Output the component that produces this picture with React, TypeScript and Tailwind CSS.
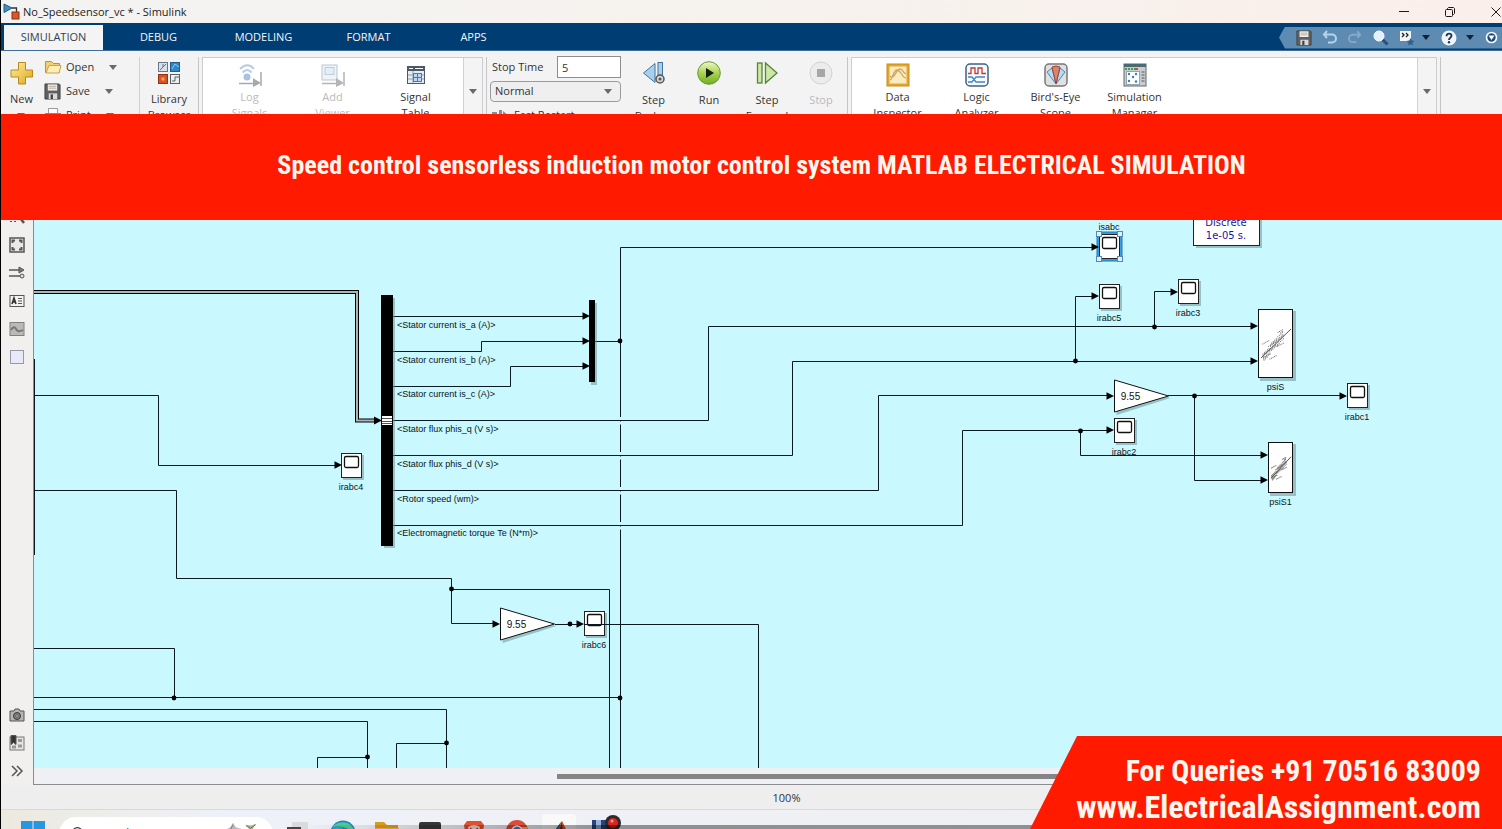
import type { ReactNode } from 'react';

const UI = 'font-["Open_Sans","Noto_Sans",sans-serif]';

function Caret({ className = 'text-[#6a6a6a]' }: { className?: string }) {
  return (
    <svg width="8" height="5" viewBox="0 0 8 5" className={className} aria-hidden="true">
      <path d="M0 0h8L4 5z" fill="currentColor" />
    </svg>
  );
}

function SaveIcon({ size = 18 }: { size?: number }) {
  return (
    <svg width={size} height={size} viewBox="0 0 18 18" aria-hidden="true">
      <path d="M1 1h15l1 1v15H1z" fill="#5f5f61" stroke="#444" />
      <path d="M4 1.500h10V8H4z" fill="#f0eeec" />
      <path d="M5 3.500h8M5 5.500h8" stroke="#b5a99c" />
      <path d="M5 11h9v6H5z" fill="#d9d9d9" />
      <path d="M7 12h2.500v5H7z" fill="#444" />
    </svg>
  );
}

function TitleBar() {
  return (
    <header className="flex h-[23px] shrink-0 items-center bg-gradient-to-r from-[#f3f3f2] via-[#f6f2ee] to-[#fbefea] pl-[2px]">
      <svg width="18" height="17" viewBox="0 0 18 17" aria-hidden="true">
        <path d="M1 1l8 4-8 4.500z" fill="#3d8fc4" stroke="#225c85" />
        <path d="M9 5h4.500v4" fill="none" stroke="#333" strokeWidth="1.300" />
        <rect x="9" y="9" width="7" height="7" fill="#d9572b" stroke="#8c3013" />
      </svg>
      <h1 className="pl-[2px] text-[11px] leading-[16px] text-[#1c1c1c]">No_Speedsensor_vc * - Simulink</h1>
      <div className="mr-[-17px] ml-auto flex text-[#1a1a1a]">
        <button aria-label="Minimize" className="flex h-[22px] w-[46px] items-center justify-center">
          <svg width="12" height="12" viewBox="0 0 12 12"><path d="M1 5.500h10" stroke="currentColor" /></svg>
        </button>
        <button aria-label="Restore" className="flex h-[22px] w-[46px] items-center justify-center">
          <svg width="12" height="12" viewBox="0 0 12 12" fill="none" stroke="currentColor">
            <rect x="1.500" y="3.500" width="7" height="7" rx="1" />
            <path d="M3.500 3V2.500l1-1h5l1 1v5l-1 1H9" />
          </svg>
        </button>
        <button aria-label="Close" className="flex h-[22px] w-[46px] items-center justify-center">
          <svg width="12" height="12" viewBox="0 0 12 12"><path d="M1.500 1.500l9 9M10.500 1.500l-9 9" stroke="currentColor" /></svg>
        </button>
      </div>
    </header>
  );
}

function QuickAccess() {
  return (
    <div className="ml-auto flex h-[22px] items-center bg-[#5d8bb2] pl-[15px] [clip-path:polygon(0_50%,6px_0,100%_0,100%_100%,6px_100%)]">
      <button aria-label="Save" className="flex w-[19px] justify-center"><SaveIcon size={16} /></button>
      <button aria-label="Undo" className="flex w-[33px] justify-center">
        <svg width="15" height="15" viewBox="0 0 15 15" fill="none" stroke="#b4d3ec" strokeWidth="2">
          <path d="M5 1L2 4.500 5 8M2 4.500h8a3.500 3.500 0 010 8H6" />
        </svg>
      </button>
      <button aria-label="Redo" className="flex w-[18px] justify-center">
        <svg width="14" height="15" viewBox="0 0 15 15" fill="none" stroke="#86aac9" strokeWidth="2">
          <path d="M10 1l3 3.500L10 8M13 4.500H5a3.500 3.500 0 000 8h4" />
        </svg>
      </button>
      <button aria-label="Find" className="flex w-[34px] justify-center">
        <svg width="16" height="16" viewBox="0 0 16 16">
          <path d="M9 9l5.500 5.500" stroke="#294f7c" strokeWidth="3" />
          <circle cx="6" cy="6" r="5" fill="#e3f1fb" stroke="#fafdff" />
        </svg>
      </button>
      <button aria-label="Favorites" className="flex w-[18px] justify-center">
        <svg width="16" height="16" viewBox="0 0 16 16">
          <path d="M1 1h11v10H1z" fill="#f3f5f7" />
          <path d="M3 3l2 2-2 2M7 3l2 2-2 2" fill="none" stroke="#222" strokeWidth="1.300" />
          <path d="M11.500 8l1.200 2.600 2.800.3-2.100 1.900.6 2.800-2.500-1.400L9 15.600l.6-2.800-2.100-1.900 2.800-.3z" fill="#2f5f90" />
        </svg>
      </button>
      <button aria-label="Favorites menu" className="flex w-[20px] justify-center"><Caret className="text-[#0e2339]" /></button>
      <button aria-label="Help" className="flex w-[26px] justify-center">
        <svg width="16" height="16" viewBox="0 0 16 16">
          <circle cx="8" cy="8" r="7.500" fill="#f2f6fa" />
          <path d="M5.500 6.200c0-3.400 5-3.400 5-.4C10.500 7.700 8 7.800 8 10" fill="none" stroke="#1c3958" strokeWidth="1.900" />
          <circle cx="8" cy="12.300" r="1.200" fill="#1c3958" />
        </svg>
      </button>
      <button aria-label="Help menu" className="flex w-[16px] justify-center"><Caret className="text-[#0e2339]" /></button>
      <button aria-label="Minimize toolstrip" className="flex w-[24px] justify-end pr-[4px]">
        <svg width="13" height="13" viewBox="0 0 13 13">
          <circle cx="6.500" cy="6.500" r="5" fill="#1f4b7a" stroke="#f2f7fb" strokeWidth="1.700" />
          <path d="M3.500 4.500h6l-3 4.500z" fill="#fff" />
        </svg>
      </button>
    </div>
  );
}

function TabBar() {
  return (
    <nav className="flex h-[28px] shrink-0 items-end border-b border-[#3f6d9b] bg-[#003d73] text-[11px] text-[#f2f6fa]">
      <button className="mr-[3px] ml-[3px] h-[25px] w-[99px] bg-[#f4f4f5] text-[#33424f]">SIMULATION</button>
      {['DEBUG', 'MODELING', 'FORMAT', 'APPS'].map((t) => (
        <button key={t} className="h-[25px] w-[105px]">{t}</button>
      ))}
      <div className="ml-auto flex h-[25px] items-center"><QuickAccess /></div>
    </nav>
  );
}

function BigButton({ icon, lines, width, disabled = false, menu = false, pad = 'gap-[7px]' }: {
  icon: ReactNode; lines: string[]; width: string; disabled?: boolean; menu?: boolean; pad?: string;
}) {
  return (
    <button
      disabled={disabled}
      className={`flex shrink-0 flex-col items-center text-[11px] leading-[16px] whitespace-nowrap ${width} ${pad} ${disabled ? 'text-[#b9babd]' : 'text-[#333]'}`}
    >
      {icon}
      <span className="flex flex-col items-center">
        {lines.map((l, i) => (
          <span key={l} className="flex items-center gap-[5px]">
            {l}
            {menu && i > 0 && <Caret />}
          </span>
        ))}
        {menu && lines.length === 1 && <span className="pt-[6px]"><Caret /></span>}
      </span>
    </button>
  );
}

function GalleryArrow() {
  return (
    <button aria-label="More" className="flex w-[19px] items-start justify-center border-l border-[#d2d2d4] bg-[#f4f4f5] pt-[31px]">
      <Caret />
    </button>
  );
}

const logIcon = (
  <svg width="26" height="24" viewBox="0 0 26 24" fill="none">
    <path d="M3 6c5-5 10-5 14 0M5.500 9.500c3.500-3.500 6-3.500 9 0" stroke="#b4cbe0" strokeWidth="2" />
    <circle cx="10" cy="14" r="3.500" fill="#a9c3dc" />
    <path d="M2 20.500h14M24 9v14" stroke="#a9a9ac" strokeWidth="1.500" />
    <path d="M16 15l8 5-8 4z" fill="#a9a9ac" />
  </svg>
);
const viewerIcon = (
  <svg width="26" height="24" viewBox="0 0 26 24" fill="none">
    <rect x="2" y="2" width="15" height="15" fill="#f0f4f7" stroke="#b8c6d2" />
    <rect x="5" y="4.500" width="9" height="7" fill="#e3eef6" stroke="#b8cedf" />
    <path d="M2 20.500h14M24 9v14" stroke="#b4b4b8" strokeWidth="1.500" />
    <path d="M16 15l8 5-8 4z" fill="#b4b4b8" />
  </svg>
);
const tableIcon = (
  <svg width="20" height="24" viewBox="0 0 20 24">
    <rect x="1.500" y="3.500" width="17" height="17" fill="#e8ecf0" stroke="#4a5a6b" />
    <path d="M1.500 3.500h17V8h-17z" fill="#4a5a6b" />
    <path d="M3 5.500h4M9 5.500h8" stroke="#fff" />
    <path d="M7 8v12M2 12h16M2 16h16" stroke="#8fa0b0" />
    <rect x="7.500" y="10.500" width="8" height="8" fill="#bcd8f5" stroke="#3f7cc0" />
    <path d="M8 14.500h7M11.500 11v7" stroke="#3f7cc0" />
  </svg>
);
const inspectorIcon = (
  <svg width="24" height="24" viewBox="0 0 24 24">
    <rect x="1" y="1" width="22" height="22" fill="#e2a62d" stroke="#c98e1b" />
    <rect x="3.500" y="3.500" width="17" height="17" fill="#fdebc0" />
    <path d="M4 17C7 16 7 7 11 7s5 8 9 8M4 13c4 5 6-7 10-7 3 0 3 4 6 5" fill="none" stroke="#cfa765" strokeWidth="1.300" />
  </svg>
);
const logicIcon = (
  <svg width="24" height="24" viewBox="0 0 24 24" fill="none">
    <rect x="1" y="1" width="22" height="22" rx="4" fill="#f7fafc" stroke="#3d6285" strokeWidth="1.500" />
    <path d="M3 10.500h3V5h4v5.500h3V5h4v5.500h4" stroke="#c23b36" strokeWidth="1.300" />
    <path d="M3 14h4l4 5h9M3 19h4l4-5h9" stroke="#3f86c6" strokeWidth="1.300" />
  </svg>
);
const birdIcon = (
  <svg width="24" height="24" viewBox="0 0 24 24">
    <rect x="1" y="1" width="22" height="22" rx="4" fill="#dfe0e1" stroke="#777" strokeWidth="1.500" />
    <path d="M12 21L3 9l5-4zM12 21l9-12-5-4z" fill="#b8dcf2" stroke="#4886b5" />
    <path d="M12 21L8 4q4-2 8 0z" fill="#d98471" stroke="#a5412f" />
  </svg>
);
const managerIcon = (
  <svg width="24" height="24" viewBox="0 0 24 24">
    <rect x="1" y="1" width="22" height="22" fill="#c9cdcf" stroke="#5e6a70" />
    <path d="M1 1h22v3H1z" fill="#4c6a73" />
    <path d="M2 6h13" stroke="#4c9b4c" strokeWidth="2" strokeDasharray="2 1" />
    <path d="M12 6h2" stroke="#c44" strokeWidth="2" />
    <rect x="3.500" y="8.500" width="13" height="13" fill="#fff" stroke="#98a5ad" />
    <path d="M18.500 9h3M18.500 12h3M18.500 15h3M18.500 18h3" stroke="#555" />
    <g fill="#2f7fc1"><circle cx="6" cy="11" r="1.200" /><circle cx="13" cy="11" r="1.200" /><circle cx="10" cy="14" r="1.200" /><circle cx="6" cy="18" r="1.200" /><circle cx="13" cy="18.500" r="1.200" /></g>
  </svg>
);
const plusIcon = (
  <svg width="24" height="24" viewBox="0 0 24 24">
    <defs><linearGradient id="gold" x1="0" y1="0" x2="1" y2="1"><stop offset="0" stopColor="#fdf09a" /><stop offset="1" stopColor="#e0a520" /></linearGradient></defs>
    <path d="M8.500 1.500h7v7.500h7v7h-7v7h-7v-7H1V9h7.500z" fill="url(#gold)" stroke="#b88a20" />
  </svg>
);
const libraryIcon = (
  <svg width="24" height="24" viewBox="0 0 24 24">
    <rect x="1.500" y="1.500" width="9" height="9" fill="#d7dfe8" stroke="#68788a" />
    <path d="M3 9l3-3V3M6 6l3-3" stroke="#5f7690" fill="none" />
    <rect x="13.500" y="1.500" width="9" height="9" fill="#2f87c6" stroke="#1e5c8c" />
    <path d="M15 8l3-5 4 3" fill="none" stroke="#8ccaf2" />
    <rect x="1.500" y="13.500" width="9" height="9" fill="#d8531f" stroke="#93350f" />
    <rect x="4.500" y="16.500" width="3" height="3" fill="#f0a17b" />
    <rect x="13.500" y="13.500" width="9" height="9" fill="#eceff1" stroke="#56616b" />
    <path d="M15 20h3v-4h4" fill="none" stroke="#56616b" />
  </svg>
);
const stepBackIcon = (
  <svg width="24" height="24" viewBox="0 0 24 24">
    <path d="M13 2.500v19L1.500 12z" fill="#a9cfea" stroke="#44759c" />
    <rect x="16" y="1.500" width="4.500" height="18" fill="#a9cfea" stroke="#44759c" />
    <circle cx="18" cy="18" r="4" fill="#d5d5d5" stroke="#555" strokeWidth="1.500" />
    <circle cx="18" cy="18" r="1.500" fill="#555" />
  </svg>
);
const runIcon = (
  <svg width="24" height="24" viewBox="0 0 24 24">
    <defs><linearGradient id="run" x1="0" y1="0" x2="0" y2="1"><stop offset="0" stopColor="#edf7c9" /><stop offset=".5" stopColor="#a9d552" /><stop offset="1" stopColor="#6fae21" /></linearGradient></defs>
    <circle cx="12" cy="12" r="11.300" fill="url(#run)" stroke="#6a9a30" />
    <path d="M9 7l8 5-8 5z" fill="#14200a" />
  </svg>
);
const stepForwardIcon = (
  <svg width="24" height="24" viewBox="0 0 24 24" fill="#cde8a6" stroke="#55863a" strokeWidth="1.300">
    <rect x="2.500" y="2" width="4.500" height="20" />
    <path d="M10.500 2v20L22 12z" />
  </svg>
);
const stopIcon = (
  <svg width="24" height="24" viewBox="0 0 24 24">
    <circle cx="12" cy="12" r="11" fill="#ececed" stroke="#d2d2d4" />
    <rect x="8" y="8" width="8" height="8" fill="#a6a6a8" />
  </svg>
);
const folderIcon = (
  <svg width="18" height="16" viewBox="0 0 18 16">
    <path d="M1.500 2.500h6l2 2h6v9h-14z" fill="#f3cf72" stroke="#b8923c" />
    <path d="M5 6.500h12l-2 7.500H2z" fill="#fdeeb5" stroke="#c9a24a" />
  </svg>
);
const printIcon = (
  <svg width="18" height="16" viewBox="0 0 18 16">
    <path d="M4.500 1.500h9v5h-9z" fill="#fff" stroke="#999" />
    <rect x="1.500" y="6.500" width="15" height="7" fill="#c9c9cb" stroke="#888" />
  </svg>
);

function FileRow({ icon, label }: { icon: ReactNode; label: string }) {
  return (
    <button className="flex h-[24px] items-center text-[11px] text-[#333]">
      <span className="flex w-[22px]">{icon}</span>
      {label}
      <span className="pl-[15px]"><Caret /></span>
    </button>
  );
}

function Ribbon() {
  return (
    <div className="flex h-[89px] shrink-0 overflow-hidden bg-[#f3f3f4] pt-[6px]">
      <div className="flex w-[139px] border-r border-[#d0d0d2] pt-[4px]">
        <BigButton icon={plusIcon} lines={['New']} width="w-[41px]" menu pad="gap-[6px]" />
        <div className="mt-[-6px] flex flex-col items-start pl-[2px]">
          <FileRow icon={folderIcon} label="Open" />
          <FileRow icon={<SaveIcon size={17} />} label="Save" />
          <FileRow icon={printIcon} label="Print" />
        </div>
      </div>
      <div className="flex w-[59px] border-r border-[#c6c6c8] pt-[4px]">
        <BigButton icon={libraryIcon} lines={['Library', 'Browser']} width="w-[58px]" pad="gap-[6px]" />
      </div>
      <div className="ml-[3px] flex w-[281px] border border-[#cdcdd0] bg-white">
        <div className="flex flex-1 pt-[5px] pl-[5px]">
          <BigButton icon={logIcon} lines={['Log', 'Signals']} width="w-[83px]" disabled pad="gap-[2px]" />
          <BigButton icon={viewerIcon} lines={['Add', 'Viewer']} width="w-[83px]" disabled pad="gap-[2px]" />
          <BigButton icon={tableIcon} lines={['Signal', 'Table']} width="w-[83px]" pad="gap-[2px]" />
        </div>
        <GalleryArrow />
      </div>
      <div className="ml-[3px] w-[136px] border-l border-[#c6c6c8] pl-[3px] text-[11px] text-[#333]">
        <div className="flex items-center">
          <label htmlFor="stop-time" className="w-[67px] pl-[2px]">Stop Time</label>
          <input id="stop-time" defaultValue="5" className="mt-[-1px] h-[22px] w-[64px] border border-[#8e8e92] bg-white px-[4px]" />
        </div>
        <div className="relative mt-[3px] flex w-[131px] items-center">
          <select aria-label="Simulation mode" className="h-[21px] w-full appearance-none rounded-[4px] border border-[#9b9b9f] bg-[#efeff0] px-[4px]">
            <option>Normal</option>
          </select>
          <span className="pointer-events-none absolute right-[9px]"><Caret /></span>
        </div>
        <button className="mt-[5px] flex items-center gap-[5px] pl-[1px]">
          <svg width="18" height="14" viewBox="0 0 18 14"><path d="M1 4h5v6H1zM8 2h3v10H8zM12 3l5 4-5 4z" fill="#7f90a3" /></svg>
          Fast Restart
        </button>
      </div>
      <div className="ml-[4px] flex w-[222px] border-r border-[#c6c6c8] pt-[4px]">
        <BigButton icon={stepBackIcon} lines={['Step', 'Back']} width="w-[55px]" menu />
        <BigButton icon={runIcon} lines={['Run']} width="w-[56px]" menu />
        <BigButton icon={stepForwardIcon} lines={['Step', 'Forward']} width="w-[60px]" />
        <BigButton icon={stopIcon} lines={['Stop']} width="w-[48px]" disabled />
      </div>
      <div className="mr-[3px] ml-[3px] flex min-w-0 flex-1 border border-[#cdcdd0] bg-white">
        <div className="flex min-w-0 flex-1 overflow-hidden pt-[5px] pl-[6px]">
          <BigButton icon={inspectorIcon} lines={['Data', 'Inspector']} width="w-[79px]" pad="gap-[2px]" />
          <BigButton icon={logicIcon} lines={['Logic', 'Analyzer']} width="w-[79px]" pad="gap-[2px]" />
          <BigButton icon={birdIcon} lines={["Bird's-Eye", 'Scope']} width="w-[79px]" pad="gap-[2px]" />
          <BigButton icon={managerIcon} lines={['Simulation', 'Manager']} width="w-[79px]" pad="gap-[2px]" />
        </div>
        <GalleryArrow />
      </div>
      <div className="w-[62px] border-l border-[#c6c6c8]" />
    </div>
  );
}

function PaletteButton({ label, children }: { label: string; children: ReactNode }) {
  return (
    <button aria-label={label} className="flex h-[28px] w-full shrink-0 items-center justify-center">
      <svg width="16" height="16" viewBox="0 0 16 16" fill="none" stroke="#555">{children}</svg>
    </button>
  );
}

function Palette() {
  return (
    <aside className="flex w-[32px] shrink-0 flex-col bg-[#f2f0ef] pt-[63px]">
      <PaletteButton label="Zoom">
        <path d="M1 12.500h8" strokeDasharray="2 2" /><circle cx="8" cy="6" r="4" /><path d="M11 9l4 5" strokeWidth="2.500" />
      </PaletteButton>
      <PaletteButton label="Fit to view">
        <rect x="1" y="1" width="14" height="14" fill="#e9e9e9" strokeWidth="1.500" />
        <path d="M3.500 6V3.500H6M10 3.500h2.500V6M12.500 10v2.500H10M6 12.500H3.500V10" strokeWidth="2" />
      </PaletteButton>
      <PaletteButton label="Arrows">
        <path d="M0 5h11M0 11h11" strokeWidth="1.500" /><path d="M10 2l5 3-5 3z" fill="#777" /><circle cx="13" cy="11" r="2" fill="#ddd" />
      </PaletteButton>
      <PaletteButton label="Annotation">
        <rect x="1" y="2.500" width="14" height="11" fill="#f3f3f3" /><path d="M3 11l2-6 2 6M4 9h3" strokeWidth="1.600" stroke="#333" /><path d="M9 5.500h4M9 8h4M9 10.500h4" />
      </PaletteButton>
      <PaletteButton label="Image">
        <rect x="1" y="1.500" width="14" height="13" fill="#b9b9b9" stroke="#808080" /><path d="M2 9q3-5 5-1t7 1" stroke="#777" strokeWidth="2" />
      </PaletteButton>
      <PaletteButton label="Area"><rect x="1.500" y="1.500" width="13" height="13" fill="#e7e9f8" stroke="#9698ac" /></PaletteButton>
      <div className="flex-1" />
      <PaletteButton label="Screenshot">
        <path d="M1 4h4l1-2h4l1 2h4v10H1z" fill="#b5b5b5" /><circle cx="8" cy="9" r="3.500" fill="#888" stroke="#333" /><circle cx="8" cy="9" r="1.300" fill="#ddd" />
      </PaletteButton>
      <PaletteButton label="Model browser">
        <rect x="1" y="2" width="14" height="13" fill="#e5e5e5" stroke="#777" /><path d="M2 .5h5v9L4.500 7.500 2 9.500z" fill="#333" /><path d="M9 5.500h4M9 11h4M3 12h4" strokeWidth="3" stroke="#999" />
      </PaletteButton>
      <PaletteButton label="More"><path d="M3 3l5 5-5 5M8 3l5 5-5 5" strokeWidth="1.500" /></PaletteButton>
    </aside>
  );
}

function Arrow({ x, y }: { x: number; y: number }) {
  return <path d={`M${x} ${y}l-7.500 -3.800v7.600z`} fill="#000" stroke="none" />;
}

function Dot({ x, y }: { x: number; y: number }) {
  return <circle cx={x} cy={y} r="2.400" fill="#000" stroke="none" />;
}

function Label({ x, y, text, anchor = 'middle' }: { x: number; y: number; text: string; anchor?: 'middle' | 'start' }) {
  return <text x={x} y={y} textAnchor={anchor} fontSize={9} fill="#0a1418" stroke="none">{text}</text>;
}

function Scope({ x, y, name, selected = false, labelY }: { x: number; y: number; name: string; selected?: boolean; labelY?: number }) {
  return (
    <g>
      {selected && <rect x={x - 2} y={y - 2} width="25" height="29" fill="#3c9fe4" stroke="#1b78bd" />}
      {!selected && <rect x={x + 2} y={y + 2} width="21" height="25" fill="#6d9299" stroke="none" opacity=".55" />}
      <rect x={x + 0.5} y={y + 0.5} width="20" height="24" fill="#fff" stroke="#222" />
      <rect x={x + 3.5} y={y + 3.5} width="14" height="11" rx="1.500" fill="#fff" stroke="#111" strokeWidth="1.300" />
      {selected && [[-2, -2], [19, -2], [-2, 23], [19, 23]].map(([dx, dy]) => (
        <rect key={`${dx},${dy}`} x={x + dx - 0.5} y={y + dy - 0.5} width="5" height="5" fill="#dff0fb" stroke="#5089b5" />
      ))}
      <Label x={x + 10} y={labelY ?? y + 37} text={name} />
    </g>
  );
}

function Gain({ x, y }: { x: number; y: number }) {
  return (
    <g>
      <path d={`M${x + 2} ${y - 13}v32l54 -17z`} fill="#6d9299" stroke="none" opacity=".55" />
      <path d={`M${x} ${y - 16}v32l54 -16z`} fill="#fff" stroke="#111" />
      <text x={x + 16} y={y + 4} textAnchor="middle" fontSize={10} fill="#111" stroke="none">9.55</text>
    </g>
  );
}

function Scatter({ x, y, w, h, name }: { x: number; y: number; w: number; h: number; name: string }) {
  const dots = Array.from({ length: 110 }, (_, i) => {
    const t = ((i * 37) % 110) / 110;
    const spread = (((i * 53) % 31) / 31 - 0.5) * (i % 4 === 0 ? 0.4 : 0.14);
    return { cx: x + w * (0.12 + 0.6 * t), cy: y + h * (0.7 - 0.34 * t + spread) };
  });
  return (
    <g>
      <rect x={x + 2} y={y + 2} width={w + 1} height={h + 1} fill="#6d9299" stroke="none" opacity=".55" />
      <rect x={x + 0.5} y={y + 0.5} width={w - 1} height={h - 1} fill="#fff" stroke="#111" />
      {dots.map((d, i) => <rect key={i} x={d.cx} y={d.cy} width="1" height="1" fill="#777" stroke="none" />)}
      <path d={`M${x + 3} ${y + h * 0.71}L${x + w - 2} ${y + h * 0.29}`} stroke="#555" />
      <Label x={x + w / 2} y={y + h + 12} text={name} />
    </g>
  );
}

const wires = [
  'M392 316.500H583', 'M392 351.500H481.500V341.500H583', 'M392 386.500H510.500V366.500H583',
  'M392 420.500H708.500V326.500H1252', 'M392 455.500H792.500V361.500H1252',
  'M392 490.500H878.500V395.500H1108', 'M392 525.500H962.500V430.500H1108',
  'M595 341.500H620.500', 'M1092 247.500H620.500V768',
  'M1154.500 326.500V291.500H1172', 'M1075.500 361.500V296.500H1093',
  'M1168 395.500H1340', 'M1194.500 396V480.500H1261', 'M1080.500 430.500V455.500H1261',
  'M34 395.500H158.500V465.500H336', 'M34 490.500H176.500V578.500H451.500V623.500H494',
  'M451.500 589.500H609.500V768', 'M555 624.500H578',
  'M34 648.500H174.500V697.500', 'M34 697.500H620', 'M34 709.500H446.500V768', 'M34 721.500H367.500V768',
  'M367.500 757.500H317.500V768', 'M446.500 743.500H396.500V768', 'M34.500 359V555',
];

const arrows = [
  [590, 316], [590, 341], [590, 366], [1258, 326], [1258, 361], [1114, 396], [1114, 430], [1099, 247],
  [1178, 292], [1099, 296], [1347, 396], [1268, 455], [1268, 480], [342, 465], [500, 624], [584, 624],
];

const dots = [
  [620, 341], [1154.5, 327], [1075.5, 361], [1194.5, 396], [1080.5, 431], [451.5, 589], [570, 624],
  [620, 698], [174, 698], [446.5, 743], [367.5, 757],
];

const signals: [number, string][] = [
  [328, '<Stator current is_a (A)>'], [363, '<Stator current is_b (A)>'], [397, '<Stator current is_c (A)>'],
  [432, '<Stator flux phis_q (V s)>'], [467, '<Stator flux phis_d (V s)>'], [502, '<Rotor speed (wm)>'],
  [536, '<Electromagnetic torque Te (N*m)>'],
];

function Diagram() {
  return (
    <svg
      width="1468" height="628" viewBox="34 140 1468 628" fill="none" stroke="#0b1a20" strokeWidth="1"
      className='block shrink-0 font-["Liberation_Sans",Arial,sans-serif]' role="img" aria-label="Induction motor model"
    >
      {wires.map((d) => <path key={d} d={d} />)}
      {[420, 455, 490, 525].map((y) => (
        <path key={y} d={`M620.500 ${y - 3}v3M620.500 ${y + 1.5}v3`} stroke="#c9f8ff" strokeWidth="2" />
      ))}
      <path d="M34 292H357V420.500H376" stroke="#000" strokeWidth="4" />
      <path d="M34 292H357V420.500H374" stroke="#a9b6ba" strokeWidth="2" />
      <path d="M382 420.500l-8 -4v8z" fill="#000" stroke="none" />

      <rect x="384" y="298" width="11" height="250" fill="#6d9299" stroke="none" opacity=".55" />
      <rect x="381" y="295" width="12" height="251" fill="#000" stroke="none" />
      <rect x="382" y="416" width="10" height="9" fill="#fff" stroke="none" />
      <path d="M382 418.500h10M382 421.500h10M382 423.500h10" stroke="#555" />
      <rect x="591" y="303" width="6" height="82" fill="#6d9299" stroke="none" opacity=".55" />
      <rect x="589" y="300" width="6" height="82" fill="#000" stroke="none" />

      {signals.map(([y, t]) => <Label key={t} x={397} y={y} text={t} anchor="start" />)}

      <Gain x={1114.5} y={396} />
      <Gain x={500.5} y={624} />
      <Scope x={1099} y={234} name="isabc" selected labelY={230} />
      <Scope x={1099} y={284} name="irabc5" />
      <Scope x={1178} y={279} name="irabc3" />
      <Scope x={1347} y={383} name="irabc1" />
      <Scope x={1114} y={418} name="irabc2" />
      <Scope x={341} y={453} name="irabc4" />
      <Scope x={584} y={611} name="irabc6" />
      <path d="M584 624.500H758.500V768M1100 455.500H1150" />
      <Scatter x={1258} y={309} w={35} h={69} name="psiS" />
      <Scatter x={1268} y={442} w={25} h={51} name="psiS1" />

      <rect x="1196" y="190" width="66" height="58" fill="#6d9299" stroke="none" opacity=".55" />
      <rect x="1193.500" y="180.500" width="66" height="65" fill="#fff" stroke="#222" />
      <g className='font-["DejaVu_Sans",sans-serif]' fontSize="10" fill="#1c16a8" stroke="none" textAnchor="middle">
        <text x="1226" y="226">Discrete</text>
        <text x="1226" y="239">1e-05 s.</text>
      </g>
      {arrows.map(([x, y]) => <Arrow key={`${x}-${y}`} x={x} y={y} />)}
      {dots.map(([x, y]) => <Dot key={`${x}-${y}`} x={x} y={y} />)}
    </svg>
  );
}

function Taskbar() {
  return (
    <footer className="flex h-[20px] shrink-0 items-start overflow-hidden border-t border-[#d9d9d9] bg-gradient-to-r from-[#ece9df] via-[#eef1f8] via-15% to-[#efeff0] pl-[20px]">
      <button aria-label="Start" className="mt-[11px]">
        <svg width="24" height="24" viewBox="0 0 24 24" fill="#2697e0"><path d="M0 0h11.500v11.500H0zM12.500 0H24v11.500H12.500zM0 12.500h11.500V24H0zM12.500 12.500H24V24H12.500z" /></svg>
      </button>
      <label className="mt-[7px] ml-[14px] flex h-[34px] w-[214px] items-start rounded-full bg-white px-[12px] pt-[8px]">
        <svg width="14" height="18" viewBox="0 0 14 18" fill="none" stroke="#333" strokeWidth="1.500"><circle cx="7" cy="7" r="5" /><path d="M4 11l-3 4" /></svg>
        <input aria-label="Search" placeholder="Search" className="ml-[9px] h-[18px] w-[130px] text-[13px] placeholder:text-[#555]" />
        <svg width="42" height="18" viewBox="0 0 42 18" fill="none" className="mt-[-3px]">
          <path d="M2 8l6-3 3-5 3 5 7 2-5 9H6z" fill="#b9b9bb" /><path d="M8 8l3-6M13 10l6-3M4 10l6 3" stroke="#777" />
          <path d="M25 2l6 1 5-2-3 5 3 6h-9l2-5z" fill="#a9b98f" /><path d="M25 3l5 3 6-4" stroke="#5e7145" />
        </svg>
      </label>
      <button aria-label="Task view" className="mt-[12px] ml-[13px] w-[24px]">
        <svg width="24" height="20" viewBox="0 0 24 20"><rect x="6" width="16" height="14" fill="#dadadc" /><rect x="1" y="5" width="14" height="12" fill="#444" /></svg>
      </button>
      <button aria-label="Edge" className="mt-[10px] ml-[20px]">
        <svg width="26" height="26" viewBox="0 0 26 26"><circle cx="13" cy="13" r="12.500" fill="#1784cf" /><path d="M2 8a12.500 12.500 0 0123 8c-4-7-13-12-23-8z" fill="#51c98b" /><path d="M1 10c7-6 15-2 15 5H1z" fill="#2aa9dc" /><path d="M5 13c4-5 9-3 10 1z" fill="#1559a7" /></svg>
      </button>
      <button aria-label="Files" className="mt-[12px] ml-[18px]">
        <svg width="26" height="20" viewBox="0 0 26 20"><path d="M1 0h9l3 3h11v17H1z" fill="#d99b1c" /><path d="M1 6h24v14H1z" fill="#f0bd42" /></svg>
      </button>
      <button aria-label="Terminal" className="mt-[12px] ml-[19px]">
        <svg width="22" height="20" viewBox="0 0 22 20"><rect width="22" height="20" rx="2" fill="#343536" /></svg>
      </button>
      <button aria-label="Browser" className="mt-[10px] ml-[22px]">
        <svg width="22" height="24" viewBox="0 0 22 24"><path d="M4 1h14l3 4-2 14-8 4-8-4L1 5z" fill="#e2502c" /><path d="M5 7q6-4 12 0l-2 8H7z" fill="#f6dcd3" /><path d="M7 8l3 2M15 8l-3 2" stroke="#713" /></svg>
      </button>
      <button aria-label="Chrome" className="mt-[10px] ml-[21px]">
        <svg width="22" height="22" viewBox="0 0 22 22"><circle cx="11" cy="11" r="11" fill="#dd4b39" /><path d="M1 8l6 10h4v4A11 11 0 011 8z" fill="#3a9d4f" /><path d="M11 7h10a11 11 0 01-8 15z" fill="#f5c33b" /><circle cx="11" cy="11" r="5" fill="#3f7de0" stroke="#fff" strokeWidth="1.500" /></svg>
      </button>
      <button aria-label="MATLAB" className="mt-[4px] ml-[14px] flex h-[36px] w-[34px] justify-center rounded bg-[#f9f9fa] pt-[7px]">
        <svg width="24" height="22" viewBox="0 0 24 22"><path d="M0 13l8-4 7-9 9 18-5-3-6 6-4-7z" fill="#cf5a22" /><path d="M0 13l8-4 6-8-4 14z" fill="#3c5f8b" /><path d="M15 0q-2 9-5 14l3 7 3-5z" fill="#6d2212" /></svg>
      </button>
      <button aria-label="Recorder" className="mt-[5px] ml-[16px]">
        <svg width="30" height="24" viewBox="0 0 30 24"><rect y="5" width="22" height="19" fill="#26457c" /><path d="M4 5h5v19H4z" fill="#9ab2de" /><circle cx="21" cy="8" r="8" fill="#2b2b2e" /><circle cx="21" cy="8" r="5" fill="#e0241d" /><circle cx="20" cy="6" r="1.500" fill="#ff9c92" /></svg>
      </button>
    </footer>
  );
}

export default function App() {
  return (
    <div className={`relative flex h-screen flex-col overflow-hidden border-l border-black bg-[#f0f0f0] ${UI}`}>
      <TitleBar />
      <TabBar />
      <Ribbon />
      <main className="flex min-h-0 flex-1">
        <Palette />
        <section className="flex min-w-0 flex-1 flex-col border-b border-l border-[#8c8c90] bg-[#eef0f4]">
          <div className="min-h-0 flex-1 overflow-hidden bg-[#c9f8ff]"><Diagram /></div>
          <div className="flex h-[16px] shrink-0 items-center">
            <div className="ml-[35.6%] h-[5px] w-[50%] bg-[#858587]" />
          </div>
        </section>
      </main>
      <div className="flex h-[24px] shrink-0 items-center bg-[#eeeeef] pt-[3px] text-[11px] text-[#333]">
        <span className="w-full pl-[70px] text-center">100%</span>
      </div>
      <Taskbar />

      <div className="absolute inset-x-0 bottom-0 h-[4px] bg-gradient-to-r from-transparent from-20% via-black/40 via-40% to-black/40" />
      <div className='absolute inset-x-0 top-[114px] flex h-[106px] items-center justify-center bg-[#ff1a00] pb-[4px] pl-[20px] font-["Roboto_Condensed","Liberation_Sans_Narrow",sans-serif] text-[26px] leading-[32px] font-bold whitespace-nowrap text-[#fff6ee]'>
        <h2>Speed control sensorless induction motor control system MATLAB ELECTRICAL SIMULATION</h2>
      </div>
      <div className='absolute right-0 bottom-0 flex h-[93px] w-[472px] flex-col items-end bg-[#ff1a00] pt-[16px] pr-[21px] font-["Roboto_Condensed","Liberation_Sans_Narrow",sans-serif] leading-[37px] font-bold whitespace-nowrap text-[#fff6ee] [clip-path:polygon(47px_0,100%_0,100%_100%,0_100%)]'>
        <p className="text-[30px]">For Queries +91 70516 83009</p>
        <a href="https://www.ElectricalAssignment.com" className="text-[32px]">www.ElectricalAssignment.com</a>
      </div>
    </div>
  );
}
